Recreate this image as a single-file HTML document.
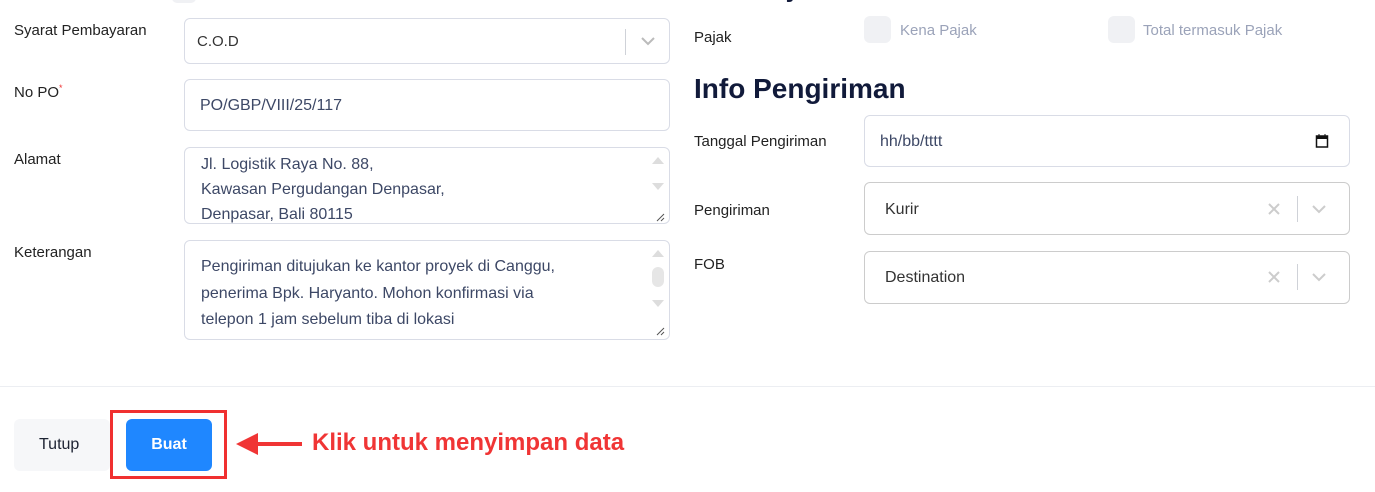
<!DOCTYPE html>
<html><head><meta charset="utf-8"><style>
*{box-sizing:border-box;margin:0;padding:0}
body{width:1375px;height:492px;background:#fff;font-family:"Liberation Sans",Arial,sans-serif;position:relative;overflow:hidden;color:#222}
.a{position:absolute}
.lbl{position:absolute;font-size:15px;color:#222}
.box{position:absolute;border:1px solid #d9dce6;border-radius:6px;background:#fff}
.txt{position:absolute;font-size:16px;color:#3d4866}
.sep{position:absolute;width:1px;height:26px;background:#cfd2d8}
</style></head><body>
<div class="a" style="left:172px;top:-8px;width:24px;height:11px;background:#f0f1f4;border-radius:5px"></div>
<div class="a" style="left:694px;top:-29px;font-size:28px;font-weight:bold;color:#111a3a">Info Pajak</div>

<div class="lbl" style="left:14px;top:22px">Syarat Pembayaran</div>
<div class="box" style="left:184px;top:18px;width:486px;height:46px"></div>
<div class="txt" style="left:197px;top:33px;font-size:15px;color:#333">C.O.D</div>
<div class="sep" style="left:625px;top:29px"></div>
<svg class="a" style="left:640px;top:35px" width="16" height="12"><path d="M2 3l6 6 6-6" stroke="#bbb" stroke-width="2" fill="none"/></svg>

<div class="lbl" style="left:14px;top:83px">No PO<sup style="color:#e33;font-size:9px">*</sup></div>
<div class="box" style="left:184px;top:79px;width:486px;height:52px"></div>
<div class="txt" style="left:200px;top:97px">PO/GBP/VIII/25/117</div>

<div class="lbl" style="left:14px;top:151px">Alamat</div>
<div class="box" style="left:184px;top:147px;width:486px;height:77px"></div>
<div class="txt" style="left:201px;top:152px;line-height:25px;width:440px">Jl. Logistik Raya No. 88,<br>Kawasan Pergudangan Denpasar,<br>Denpasar, Bali 80115</div>
<svg class="a" style="left:650px;top:152px" width="16" height="70"><path d="M2 12l6-7 6 7z M2 31l6 7 6-7z" fill="#ddd"/><path d="M14 62l-7 7M14 66l-3 3" stroke="#555" stroke-width="1"/></svg>

<div class="lbl" style="left:14px;top:244px">Keterangan</div>
<div class="box" style="left:184px;top:240px;width:486px;height:100px"></div>
<div class="txt" style="left:201px;top:254px;line-height:26.5px;width:450px">Pengiriman ditujukan ke kantor proyek di Canggu,<br>penerima Bpk. Haryanto. Mohon konfirmasi via<br>telepon 1 jam sebelum tiba di lokasi</div>
<svg class="a" style="left:650px;top:245px" width="16" height="93"><path d="M2 12l6-7 6 7z M2 55l6 7 6-7z" fill="#ddd"/><rect x="2" y="22" width="12" height="20" rx="6" fill="#e6e6e6"/><path d="M14 83l-7 7M14 87l-3 3" stroke="#555"/></svg>

<div class="lbl" style="left:694px;top:29px">Pajak</div>
<div class="a" style="left:864px;top:16px;width:27px;height:27px;background:#f0f1f4;border-radius:6px"></div>
<div class="a" style="left:900px;top:22px;font-size:15px;color:#9ba3b9">Kena Pajak</div>
<div class="a" style="left:1108px;top:16px;width:27px;height:27px;background:#f0f1f4;border-radius:6px"></div>
<div class="a" style="left:1143px;top:22px;font-size:15px;color:#9ba3b9">Total termasuk Pajak</div>

<div class="a" style="left:694px;top:73px;font-size:28px;font-weight:bold;color:#111a3a">Info Pengiriman</div>

<div class="lbl" style="left:694px;top:133px">Tanggal Pengiriman</div>
<div class="box" style="left:864px;top:115px;width:486px;height:52px"></div>
<div class="txt" style="left:880px;top:133px">hh/bb/tttt</div>
<svg class="a" style="left:1315px;top:133px" width="14" height="16"><rect x="1.5" y="3" width="11" height="11" fill="none" stroke="#111" stroke-width="1.5"/><rect x="1.5" y="3" width="11" height="3" fill="#111"/><path d="M4 1v3M10 1v3" stroke="#111"/></svg>

<div class="lbl" style="left:694px;top:202px">Pengiriman</div>
<div class="box" style="left:864px;top:182px;width:486px;height:53px;border-color:#ccc"></div>
<div class="txt" style="left:885px;top:201px;color:#333">Kurir</div>
<svg class="a" style="left:1268px;top:203px" width="12" height="12"><path d="M1 1l10 10M11 1L1 11" stroke="#ccc" stroke-width="2"/></svg>
<div class="sep" style="left:1297px;top:196px"></div>
<svg class="a" style="left:1311px;top:203px" width="16" height="12"><path d="M2 3l6 6 6-6" stroke="#ccc" stroke-width="2" fill="none"/></svg>

<div class="lbl" style="left:694px;top:256px">FOB</div>
<div class="box" style="left:864px;top:251px;width:486px;height:53px;border-color:#ccc"></div>
<div class="txt" style="left:885px;top:269px;color:#333">Destination</div>
<svg class="a" style="left:1268px;top:271px" width="12" height="12"><path d="M1 1l10 10M11 1L1 11" stroke="#ccc" stroke-width="2"/></svg>
<div class="sep" style="left:1297px;top:264px"></div>
<svg class="a" style="left:1311px;top:271px" width="16" height="12"><path d="M2 3l6 6 6-6" stroke="#ccc" stroke-width="2" fill="none"/></svg>

<div class="a" style="left:0;top:386px;width:1375px;height:1px;background:#eceef2"></div>

<div class="a" style="left:14px;top:419px;width:96px;height:52px;background:#f6f7f9;border-radius:6px"></div>
<div class="a" style="left:39px;top:436px;font-size:16px;color:#1d2333">Tutup</div>
<div class="a" style="left:110px;top:410px;width:117px;height:69px;border:3px solid #f03030"></div>
<div class="a" style="left:126px;top:419px;width:86px;height:52px;background:#1f87ff;border-radius:6px;color:#fff;font-size:16px;font-weight:bold;text-align:center;line-height:52px">Buat</div>
<svg class="a" style="left:232px;top:430px" width="72" height="28"><path d="M70 14H20" stroke="#f03535" stroke-width="4"/><path d="M4 14L26 3v22z" fill="#f03535"/></svg>
<div class="a" style="left:312px;top:429px;font-size:24px;font-weight:bold;color:#f03535">Klik untuk menyimpan data</div>
</body></html>
